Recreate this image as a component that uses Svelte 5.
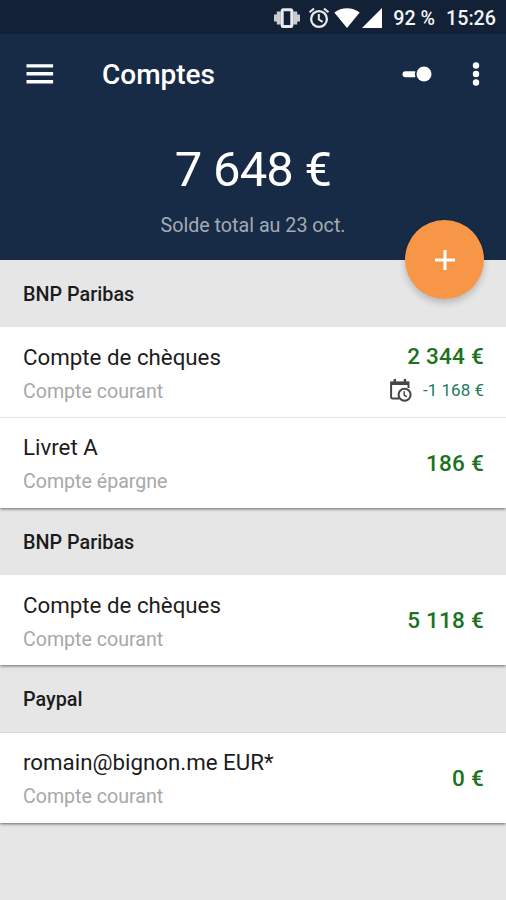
<script lang="ts">
	type Account = { name: string; kind: string; amount: string; pending?: string };
	type Bank = { name: string; accounts: Account[] };

	const banks: Bank[] = [
		{
			name: 'BNP Paribas',
			accounts: [
				{ name: 'Compte de chèques', kind: 'Compte courant', amount: '2 344 €', pending: '-1 168 €' },
				{ name: 'Livret A', kind: 'Compte épargne', amount: '186 €' },
			],
		},
		{
			name: 'BNP Paribas',
			accounts: [{ name: 'Compte de chèques', kind: 'Compte courant', amount: '5 118 €' }],
		},
		{
			name: 'Paypal',
			accounts: [{ name: 'romain@bignon.me EUR*', kind: 'Compte courant', amount: '0 €' }],
		},
	];
</script>

<div class="screen">
	<div class="status">
		<svg class="vibrate" viewBox="0 0 28 20" width="28" height="20">
			<path d="M1 6.5h3v7H1zM3.8 3.5h4v13h-4zM20.2 3.5h4v13h-4zM24 6.5h3v7h-3z" fill="#c9cdd2" />
			<rect x="9.2" y="1.8" width="9.6" height="16.6" rx="1" fill="#122136" stroke="#e8eaed" stroke-width="3" />
		</svg>
		<svg class="alarm" viewBox="0 0 22 22" width="22" height="22">
			<circle cx="11" cy="12" r="7.9" fill="none" stroke="#e8eaed" stroke-width="2.3" />
			<path d="M1.5 5.2L6 1.6M20.5 5.2L16 1.6M10.8 7v5.5l3.8 2.4" fill="none" stroke="#e8eaed" stroke-width="2" />
		</svg>
		<svg class="wifi" viewBox="0 0 26 20" width="26" height="20">
			<path d="M.3 4.5C7.5-1.2 18.5-1.2 25.7 4.5L13 20z" fill="#fff" />
		</svg>
		<svg class="signal" viewBox="0 0 20 20" width="20" height="20">
			<path d="M20 0v20H0z" fill="#fff" />
		</svg>
		<span class="battery">92 %</span>
		<span class="clock">15:26</span>
	</div>

	<header>
		<div class="toolbar">
			<svg class="menu" viewBox="0 0 28 20" width="28" height="20">
				<path d="M.5 1.9h26.6M.5 9.8h26.6M.5 17.7h26.6" stroke="#fff" stroke-width="3.4" />
			</svg>
			<h1>Comptes</h1>
			<svg class="toggle" viewBox="0 0 30 18" width="30" height="18">
				<path d="M3.5 9.2h9" stroke="#fff" stroke-width="6" stroke-linecap="round" />
				<circle cx="22" cy="9" r="9.2" fill="#172b46" />
				<circle cx="22" cy="9" r="7.5" fill="#fff" />
			</svg>
			<svg class="more" viewBox="0 0 8 24" width="8" height="24">
				<circle cx="4" cy="3.5" r="3.2" fill="#fff" />
				<circle cx="4" cy="12" r="3.2" fill="#fff" />
				<circle cx="4" cy="20.5" r="3.2" fill="#fff" />
			</svg>
		</div>
		<div class="total">7 648 €</div>
		<div class="date">Solde total au 23 oct.</div>
		<button class="fab" aria-label="Ajouter">
			<svg viewBox="0 0 22 22" width="22" height="22">
				<path d="M11 1v20M1 11h20" stroke="#fff" stroke-width="3" />
			</svg>
		</button>
	</header>

	{#each banks as bank}
		<section>
			<h2>{bank.name}</h2>
			<div class="card">
				{#each bank.accounts as account}
					<div class="row">
						<div class="info">
							<div class="name">{account.name}</div>
							<div class="kind">{account.kind}</div>
						</div>
						<div class="values">
							<div class="amount">{account.amount}</div>
							{#if account.pending}
								<div class="pending">
									<svg viewBox="0 0 24 24" width="24" height="24" fill="none" stroke="#454545">
										<path d="M10 20.4H3.6a1.5 1.5 0 0 1-1.5-1.5V4.4h17.4V10" stroke-width="2" />
										<path d="M2 5.4h17.6" stroke-width="3.4" />
										<path d="M5.8 1v4M16 1v4" stroke-width="2.4" />
										<circle cx="15.6" cy="16.7" r="6" fill="#fff" stroke-width="2" />
										<path d="M15.2 13.3v3.8l2.6 1.7" stroke-width="1.5" />
									</svg>
									<span>{account.pending}</span>
								</div>
							{/if}
						</div>
					</div>
				{/each}
			</div>
		</section>
	{/each}
</div>

<style>
	:global(body) { background: #e6e6e6; }
	.screen {
		height: 900px; overflow: hidden; background: #e6e6e6;
		font-family: Roboto, "Liberation Sans", sans-serif; color: #1c1c1c;
	}

	.status {
		display: flex; align-items: center; box-sizing: border-box; height: 34px;
		padding: 2px 10px 0 0; justify-content: flex-end;
		background: #122136; color: #f1f3f5; font-size: 19.7px; font-weight: 500;
	}
	.status svg { flex: none; }
	.alarm { margin-left: 7px; }
	.wifi { margin-left: 4px; }
	.signal { margin-left: 2px; }
	.battery { margin-left: 11px; }
	.clock { margin-left: 11px; }

	header {
		position: relative; box-sizing: border-box; height: 225.5px;
		background: #172b46; color: #fff; text-align: center;
	}
	.toolbar { display: flex; align-items: center; height: 79px; padding: 0 26px; }
	h1 { flex: 1; margin: 3px 0 0 48px; text-align: left; font-size: 28px; font-weight: 500; line-height: 32px; }
	.toggle { margin-right: 40px; }
	.total { margin-top: 27px; font-size: 49px; line-height: 60px; letter-spacing: -0.8px; }
	.date { margin-top: 13px; font-size: 19.7px; line-height: 26px; color: #a2aab5; }
	.fab {
		position: absolute; right: 22px; bottom: -39.5px; z-index: 1;
		display: flex; align-items: center; justify-content: center;
		width: 79px; height: 79px; padding: 0; border: 0; border-radius: 50%;
		background: #f79646; box-shadow: 0 4px 7px rgba(0, 0, 0, 0.2);
	}

	h2 { margin: 0; padding: 1px 23px 0; box-sizing: border-box; height: 67.5px; font-size: 19.8px; font-weight: 500; line-height: 67px; }
	.card { background: #fff; box-shadow: 0 1px 3px rgba(0, 0, 0, 0.55); clip-path: inset(0 0 -5px 0); }
	.row { display: flex; justify-content: space-between; align-items: center; height: 90px; padding: 0 22px 0 23px; }
	.row + .row { border-top: 1px solid #e3e3e3; height: 89.5px; }
	.info { padding-top: 3px; }
	.name { font-size: 22.3px; line-height: 30px; }
	.kind { margin-top: 6px; font-size: 19.6px; line-height: 28px; color: #a8a8a8; }
	.values { display: flex; flex-direction: column; align-items: flex-end; }
	.amount { font-size: 22.5px; font-weight: 500; line-height: 30px; letter-spacing: 0.25px; color: #1b7220; }
	.pending { display: flex; align-items: center; gap: 10px; margin-top: 5px; height: 28px; font-size: 17px; color: #23795a; }
</style>
